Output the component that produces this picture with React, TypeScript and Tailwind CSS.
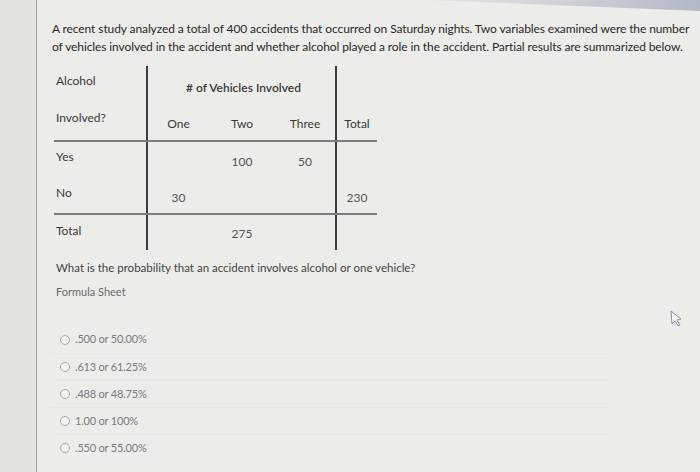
const rows = [
  { h: "h-[34px]", cells: ["Alcohol", "", "", "", ""] },
  { h: "h-[40px]", cells: ["Involved?", "One", "Two", "Three", "Total"] },
  { h: "h-[36px]", cells: ["Yes", "", "100", "50", ""] },
  { h: "h-[37px]", cells: ["No", "30", "", "", "230"] },
  { h: "h-[37px]", cells: ["Total", "", "275", "", ""] },
];

const options = [
  ".500 or 50.00%",
  ".613 or 61.25%",
  ".488 or 48.75%",
  "1.00 or 100%",
  ".550 or 55.00%",
];

function ContingencyTable() {
  return (
    <div className="mt-[10px] ml-[2px] w-[323px] text-[12px] text-[#3a3a3a]">
      {rows.map((row, r) => (
        <div
          key={r}
          className={`grid grid-cols-[92px_63px_66px_60px_42px] ${row.h} ${
            r === 2 || r === 4 ? "border-t-2 border-[#7d7d7b]" : ""
          }`}
        >
          {row.cells.map((cell, c) => {
            const isLabel = c === 0;
            const border =
              c === 1 || c === 4 ? "border-l-2 border-[#3c3c3c]" : "";
            return (
              <div
                key={c}
                className={`relative flex ${border} ${
                  isLabel ? "pl-[2px]" : "justify-center"
                } ${r === 0 ? "items-start pt-[6px]" : "items-center"} ${
                  r >= 2 && r < 4 && !isLabel ? "text-[#555] pt-[6px]" : ""
                } ${r === 4 && !isLabel ? "text-[#555] pt-[2px]" : ""} ${
                  r === 1 && !isLabel ? "pt-[8px]" : ""
                } ${r >= 1 && isLabel ? "pb-[4px]" : ""}`}
              >
                {cell}
                {r === 0 && c === 1 && (
                  <span className="absolute left-[38px] top-[13px] whitespace-nowrap font-semibold text-[#3a3a3a]">
                    # of Vehicles Involved
                  </span>
                )}
              </div>
            );
          })}
        </div>
      ))}
    </div>
  );
}

export default function App() {
  return (
    <div className="relative flex h-[472px] w-[700px] overflow-hidden bg-[#ecece9] font-['Lato','Liberation_Sans',sans-serif]">
      <div className="w-[37px] shrink-0 border-r border-[#9c9c98] bg-[#e2e2de]" />
      <div className="flex-1 pl-[15px] pt-[20px]">
        <p className="w-[648px] text-[12px] leading-[18px] tracking-[-0.1px] text-[#2a2a2a]">
          A recent study analyzed a total of 400 accidents that occurred on
          Saturday nights. Two variables examined were the number of vehicles
          involved in the accident and whether alcohol played a role in the
          accident. Partial results are summarized below.
        </p>

        <ContingencyTable />

        <p className="ml-[4px] mt-[10px] text-[11.5px] leading-[16px] text-[#444]">
          What is the probability that an accident involves alcohol or one
          vehicle?
        </p>
        <p className="ml-[4px] mt-[8px] text-[11px] leading-[16px] text-[#6a6a6a]">
          Formula Sheet
        </p>

        <div className="ml-[-2px] mt-[26px] w-[560px]">
          {options.map((o, i) => (
            <div
              key={o}
              className={`flex h-[27px] items-center gap-[5px] pl-[10px] ${
                i > 0 ? "border-t border-[#e7e7e4]" : ""
              }`}
            >
              <span className="h-[10px] w-[10px] rounded-full border border-[#a8a8a6] bg-[#f2f2f0]" />
              <span className="text-[11px] tracking-[-0.2px] text-[#7a7b80]">
                {o}
              </span>
            </div>
          ))}
        </div>
      </div>

      {/* photo glare at top right */}
      <svg
        className="absolute left-0 top-0"
        width="700"
        height="14"
        viewBox="0 0 700 14"
      >
        <defs>
          <linearGradient id="glare" x1="0" x2="1" y1="0" y2="0">
            <stop offset="0" stopColor="#c9cbd4" stopOpacity="0.3" />
            <stop offset="1" stopColor="#b3b7c6" />
          </linearGradient>
        </defs>
        <polygon points="430,0 700,0 700,11" fill="url(#glare)" />
      </svg>

      {/* mouse pointer */}
      <svg
        className="absolute left-[669px] top-[310px]"
        width="14"
        height="18"
        viewBox="0 0 14 18"
      >
        <path
          d="M2 1 L3 14 L6 11 L9 16 L11 15 L8 10 L12 9 Z"
          fill="#f4f4f6"
          stroke="#8a8f9c"
          strokeWidth="1"
          strokeLinejoin="round"
        />
      </svg>
    </div>
  );
}
